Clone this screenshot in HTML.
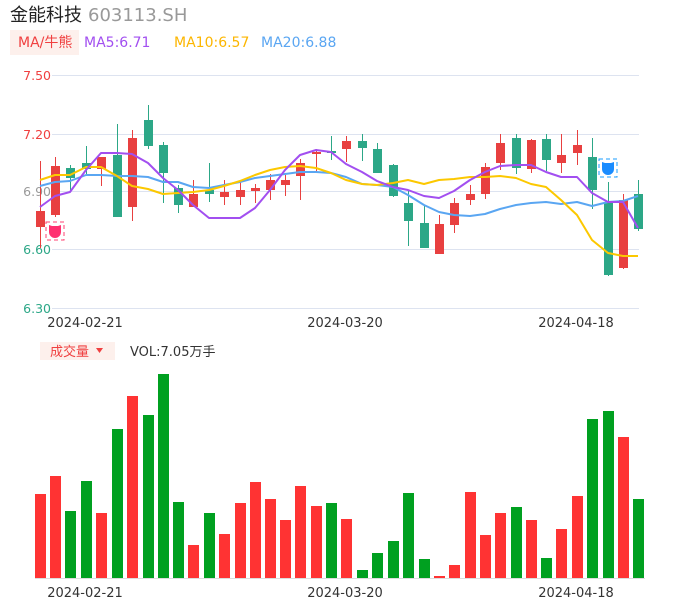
<!DOCTYPE html>
<html><head><meta charset="utf-8"><style>
body{margin:0;background:#fff;width:686px;height:606px;overflow:hidden;font-family:"Liberation Sans","DejaVu Sans","Noto Sans CJK SC",sans-serif}
</style></head><body>
<svg width="686" height="606" xmlns="http://www.w3.org/2000/svg" style="position:absolute;left:0;top:0">
<style>text{font-family:"DejaVu Sans","Noto Sans CJK SC",sans-serif}</style>
<text x="10" y="21" font-size="18" fill="#222" font-family="Noto Sans CJK SC,sans-serif">金能科技</text>
<text x="88" y="21" font-size="18" fill="#999">603113.SH</text>
<rect x="10" y="30" width="69" height="25" fill="#fdf0ec"/>
<text x="18" y="47" font-size="14" fill="#f04040">MA/牛熊</text>
<text x="84" y="47" font-size="14" fill="#a24ff0">MA5:6.71</text>
<text x="174" y="47" font-size="14" fill="#fcb600">MA10:6.57</text>
<text x="261" y="47" font-size="14" fill="#5aa6f2">MA20:6.88</text>
<g stroke="#dde3f0" stroke-width="1">
<line x1="52" y1="75.5" x2="639" y2="75.5"/><line x1="52" y1="134.5" x2="639" y2="134.5"/><line x1="52" y1="191.5" x2="639" y2="191.5"/><line x1="52" y1="249.5" x2="639" y2="249.5"/><line x1="52" y1="308.5" x2="639" y2="308.5"/>
</g>
<g font-size="12.5" text-anchor="end">
<text x="51" y="80" fill="#f04040">7.50</text><text x="51" y="139" fill="#f04040">7.20</text><text x="51" y="196" fill="#999">6.90</text><text x="51" y="254" fill="#2ca787">6.60</text><text x="51" y="313" fill="#2ca787">6.30</text>
</g>
<g font-size="13" fill="#333" text-anchor="middle">
<text x="85" y="327">2024-02-21</text><text x="345" y="327">2024-03-20</text><text x="576" y="327">2024-04-18</text>
<text x="85" y="597">2024-02-21</text><text x="345" y="597">2024-03-20</text><text x="576" y="597">2024-04-18</text>
</g>
<g id="c"></g>
<g fill="none" stroke-width="2" stroke-linejoin="round">
<polyline stroke="#5aa6f2" points="40,186 55,182 70,181 86,175 101,175 117,176 132,176 148,177 163,182 178,182 193,187 209,188 224,185 240,182 255,178 270,176 285,174 300,172 316,172 331,173 346,177 362,184 377,185 393,187 408,195 424,205 439,212 454,215 470,216 485,214 500,209 516,205 531,203 546,202 561,204 577,202 592,206 608,202 623,201 638,196"/>
<polyline stroke="#fcc800" points="40,180 55,175 70,175 86,167 101,167 117,176 132,186 148,189 163,194 178,193 193,192 209,190 224,186 240,181 255,175 270,170 285,167 300,166 316,168 331,173 346,180 362,184 377,185 393,183 408,180 424,184 439,180 454,179 470,177 485,177 500,176 516,178 531,184 546,187 561,200 577,215 592,240 608,253 623,256 638,256"/>
<polyline stroke="#a24ff0" points="40,207 55,196 70,192 86,170 101,153 117,153 132,154 148,163 163,178 178,190 193,205 209,218 224,218 240,218 255,208 270,190 285,170 300,155 316,150 331,152 346,164 362,172 377,181 393,187 408,190 424,196 439,198 454,191 470,180 485,172 500,166 516,165 531,165 546,172 561,177 577,177 592,193 608,202 623,202 638,228"/>
</g>
<rect x="46" y="222" width="18" height="18" fill="none" stroke="#ff4070" stroke-dasharray="4 3"/>
<path d="M49,225 l3,1 h6 l3,-1 v7 a6,6 0 0 1 -12,0z" fill="#ff3070"/>
<rect x="599" y="159" width="18" height="18" fill="none" stroke="#1a9cff" stroke-dasharray="4 3"/>
<path d="M602,162 l3,1 h6 l3,-1 v7 a6,6 0 0 1 -12,0z" fill="#1a8cff"/>
<rect x="40" y="342" width="75" height="18" fill="#fdf0ec"/>
<text x="50" y="356" font-size="13" fill="#f04040" font-family="Noto Sans CJK SC,sans-serif">成交量</text>
<path d="M96,348 h7 l-3.5,5z" fill="#f04040"/>
<text x="130" y="356" font-size="13" fill="#333">VOL:7.05万手</text>
<line x1="35" y1="578.5" x2="645" y2="578.5" stroke="#ddd"/>
<g id="v"></g>
</svg>
<script>
var C=[[40,211,227,161,248,1],[55,166,215,157,217,1],[70,168,178,165,192,0],[86,163,169,146,174,0],[101,157,169,157,186,1],[117,155,217,124,217,0],[132,138,207,130,221,1],[148,120,146,105,149,0],[163,145,173,142,203,0],[178,188,205,185,213,0],[193,194,207,180,207,1],[209,190,194,163,202,0],[224,192,197,180,205,1],[240,190,197,180,205,1],[255,188,191,184,203,1],[270,180,190,174,200,1],[285,180,185,175,196,1],[300,163,176,159,200,1],[316,152,154,149,172,1],[331,151,153,136,160,0],[346,141,149,136,162,1],[362,141,148,134,161,0],[377,149,173,143,173,0],[393,165,196,164,197,0],[408,203,221,190,246,0],[424,223,248,206,248,0],[439,224,254,215,254,1],[454,203,225,198,233,1],[470,194,200,185,205,1],[485,167,194,163,199,1],[500,143,163,134,170,1],[516,138,168,134,174,0],[531,140,169,139,173,1],[546,139,160,134,171,0],[561,155,163,134,173,1],[577,145,153,130,165,1],[592,157,190,138,209,0],[608,202,275,182,276,0],[623,200,268,194,269,1],[638,194,229,180,231,0]];
var V=[494,476,511,481,513,429,396,415,374,502,545,513,534,503,482,499,520,486,506,503,519,570,553,541,493,559,576,565,492,535,513,507,520,558,529,496,419,411,437,499];
var s='',t='';
C.forEach(function(c,i){var col=c[5]?'#e84040':'#2ca787';
s+='<line x1="'+(c[0]+.5)+'" y1="'+c[3]+'" x2="'+(c[0]+.5)+'" y2="'+c[4]+'" stroke="'+col+'"/>';
s+='<rect x="'+(c[0]-4)+'" y="'+c[1]+'" width="9" height="'+Math.max(1,c[2]-c[1])+'" fill="'+col+'"/>';
var vc=c[5]?'#ff3333':'#00a020';
t+='<rect x="'+(c[0]-5)+'" y="'+V[i]+'" width="11" height="'+(578-V[i])+'" fill="'+vc+'"/>';});
document.getElementById('c').innerHTML=s;document.getElementById('v').innerHTML=t;
</script>
</body></html>
